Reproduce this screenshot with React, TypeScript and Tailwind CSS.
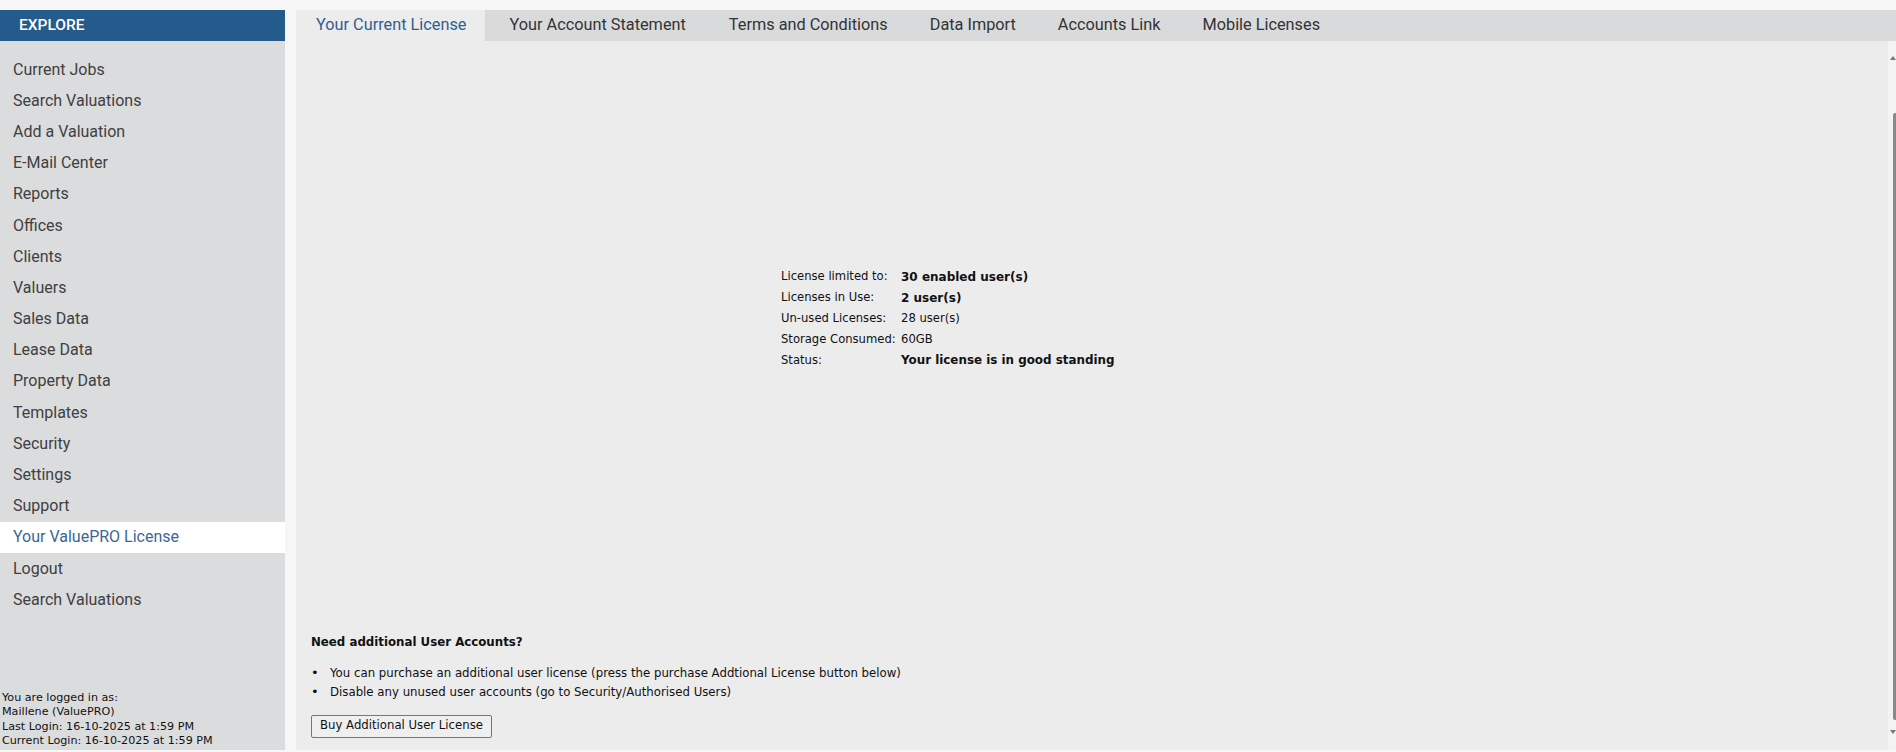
import React from "react";

const navItems = [
  "Current Jobs",
  "Search Valuations",
  "Add a Valuation",
  "E-Mail Center",
  "Reports",
  "Offices",
  "Clients",
  "Valuers",
  "Sales Data",
  "Lease Data",
  "Property Data",
  "Templates",
  "Security",
  "Settings",
  "Support",
  "Your ValuePRO License",
  "Logout",
  "Search Valuations",
];

const tabs = [
  "Your Current License",
  "Your Account Statement",
  "Terms and Conditions",
  "Data Import",
  "Accounts Link",
  "Mobile Licenses",
];

export default function App() {
  return (
    <div className="w-[1896px] h-[752px] bg-[#f6f6f6] overflow-hidden flex flex-col">
      <div className="h-[10px] shrink-0" />
      <div className="flex h-[740px]">
        {/* Sidebar */}
        <aside className="w-[285px] shrink-0 bg-[#dbdcde] flex flex-col font-['Roboto',sans-serif]">
          <div className="h-[31px] bg-[#245a8c] flex items-center pl-[19px] text-white text-[15.5px] font-medium">
            EXPLORE
          </div>
          <nav className="pt-[13px] flex flex-col">
            {navItems.map((item, i) => {
              const active = item === "Your ValuePRO License";
              return (
                <div
                  key={i}
                  className={
                    active
                      ? "h-[31.2px] flex items-center pl-[13px] text-[16px] bg-white text-[#3a679a]"
                      : "h-[31.2px] flex items-center pl-[13px] text-[16px] text-[#404040]"
                  }
                >
                  {item}
                </div>
              );
            })}
          </nav>
          <div className="mt-auto pl-[2px] pb-[1px] font-['DejaVu_Sans',sans-serif] text-[11.15px] leading-[14.6px] text-[#111]">
            <div>You are logged in as:</div>
            <div>Maillene (ValuePRO)</div>
            <div>Last Login: 16-10-2025 at 1:59 PM</div>
            <div>Current Login: 16-10-2025 at 1:59 PM</div>
          </div>
        </aside>

        {/* Gap */}
        <div className="w-[11px] shrink-0" />

        {/* Main */}
        <main className="flex-1 flex flex-col min-w-0">
          <div className="h-[31px] shrink-0 bg-[#d9dadc] flex font-['Roboto',sans-serif] text-[16.3px]">
            {tabs.map((t, i) => (
              <div
                key={i}
                className={
                  i === 0
                    ? "pl-[20px] pr-[19px] flex items-center bg-[#ececed] text-[#2f5f90]"
                    : i === 1
                    ? "pl-[24px] pr-[22px] flex items-center text-[#333]"
                    : "px-[21px] flex items-center text-[#333]"
                }
              >
                {t}
              </div>
            ))}
          </div>
          <div className="flex-1 flex min-h-0">
            <div className="flex-1 bg-[#ececed] flex flex-col pl-[15px] font-['DejaVu_Sans',sans-serif] text-[#111]">
              {/* license info */}
              <div className="mt-[225px] ml-[470px] grid grid-cols-[120px_auto] text-[11.6px]">
                <div className="h-[21px] flex items-center">License limited to:</div>
                <div className="h-[21px] flex items-center font-bold text-[12px]">30 enabled user(s)</div>
                <div className="h-[21px] flex items-center">Licenses in Use:</div>
                <div className="h-[21px] flex items-center font-bold text-[12px]">2 user(s)</div>
                <div className="h-[21px] flex items-center">Un-used Licenses:</div>
                <div className="h-[21px] flex items-center">28 user(s)</div>
                <div className="h-[21px] flex items-center">Storage Consumed:</div>
                <div className="h-[21px] flex items-center">60GB</div>
                <div className="h-[21px] flex items-center">Status:</div>
                <div className="h-[21px] flex items-center font-bold text-[11.9px]">Your license is in good standing</div>
              </div>

              {/* additional accounts */}
              <div className="mt-auto pb-[12.5px]">
                <div className="leading-[18px] text-[11.8px] font-bold">Need additional User Accounts?</div>
                <div className="mt-[13px] text-[11.75px] leading-[18.5px]">
                  <div className="flex">
                    <span className="w-[19px] text-[13px]">•</span>
                    <span>You can purchase an additional user license (press the purchase Addtional License button below)</span>
                  </div>
                  <div className="flex">
                    <span className="w-[19px] text-[13px]">•</span>
                    <span>Disable any unused user accounts (go to Security/Authorised Users)</span>
                  </div>
                </div>
                <button className="mt-[13.5px] h-[23px] w-[181px] border border-[#767676] rounded-[2px] bg-[#efefef] text-[11.7px] text-[#111] font-['DejaVu_Sans',sans-serif]">
                  Buy Additional User License
                </button>
              </div>
            </div>
            {/* scrollbar */}
            <div className="w-[8px] shrink-0 bg-[#f3f3f3] flex flex-col items-end pt-[14px]">
              <svg width="6" height="6" viewBox="0 0 6 6">
                <path d="M0 5 L3 1 L6 5 Z" fill="#7a7a7a" />
              </svg>
              <div className="mt-[52px] w-[3.5px] h-[607px] bg-[#8a8a8a] rounded-l-[2px]" />
              <svg width="6" height="6" viewBox="0 0 6 6" className="mt-[9px]">
                <path d="M0 1 L3 5 L6 1 Z" fill="#7a7a7a" />
              </svg>
            </div>
          </div>
        </main>
      </div>
      <div className="h-[2px] shrink-0" />
    </div>
  );
}
